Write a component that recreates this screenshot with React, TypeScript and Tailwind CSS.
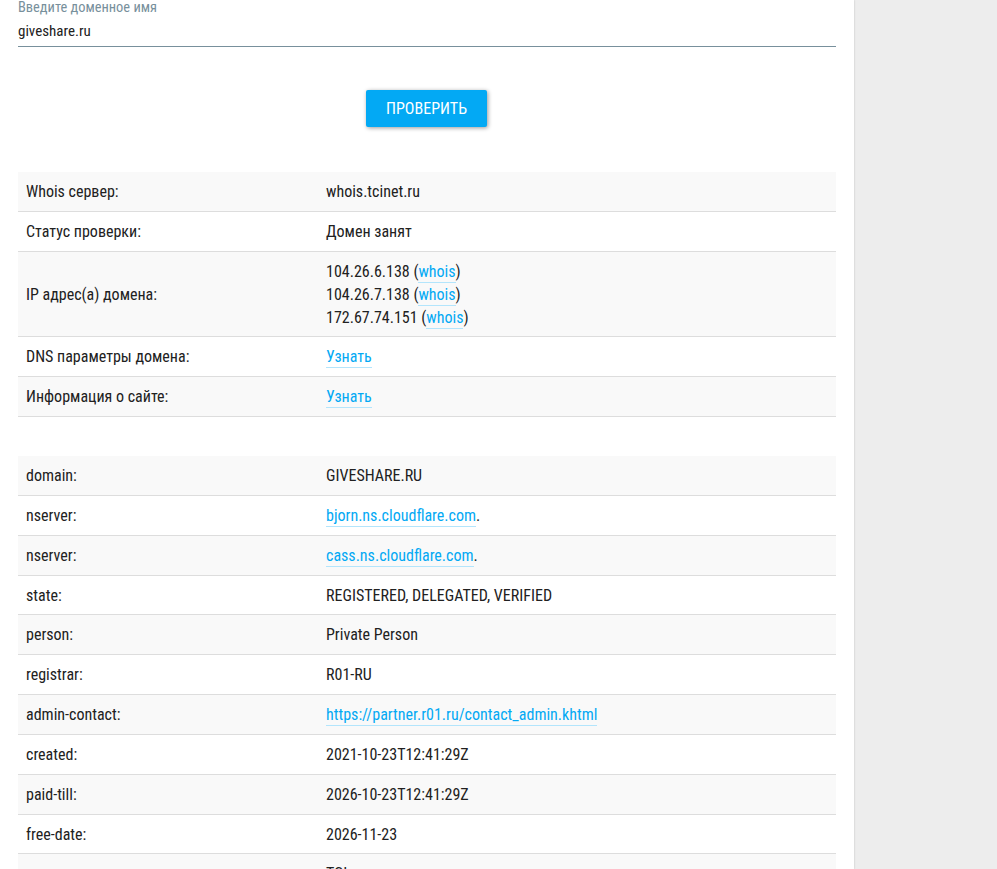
import React from 'react';

interface Row {
  label: string;
  value: React.ReactNode;
}

interface InfoTableProps {
  rows: Row[];
}

const Link: React.FC<{ children: React.ReactNode }> = ({ children }) => (
  <a
    href="#"
    className="border-b border-[#b3e5fc] pb-px text-[#03a9f4] hover:border-[#03a9f4]"
  >
    {children}
  </a>
);

const serverRows: Row[] = [
  { label: 'Whois сервер:', value: 'whois.tcinet.ru' },
  { label: 'Статус проверки:', value: 'Домен занят' },
  {
    label: 'IP адрес(а) домена:',
    value: (
      <div className="-mt-[0.5px] leading-[23px]">
        {['104.26.6.138', '104.26.7.138', '172.67.74.151'].map((ip) => (
          <div key={ip}>
            {ip} (<Link>whois</Link>)
          </div>
        ))}
      </div>
    ),
  },
  { label: 'DNS параметры домена:', value: <Link>Узнать</Link> },
  { label: 'Информация о сайте:', value: <Link>Узнать</Link> },
];

const domainRows: Row[] = [
  { label: 'domain:', value: 'GIVESHARE.RU' },
  { label: 'nserver:', value: <><Link>bjorn.ns.cloudflare.com</Link>.</> },
  { label: 'nserver:', value: <><Link>cass.ns.cloudflare.com</Link>.</> },
  { label: 'state:', value: 'REGISTERED, DELEGATED, VERIFIED' },
  { label: 'person:', value: 'Private Person' },
  { label: 'registrar:', value: 'R01-RU' },
  {
    label: 'admin-contact:',
    value: <Link>https://partner.r01.ru/contact_admin.khtml</Link>,
  },
  { label: 'created:', value: '2021-10-23T12:41:29Z' },
  { label: 'paid-till:', value: '2026-10-23T12:41:29Z' },
  { label: 'free-date:', value: '2026-11-23' },
  { label: 'source:', value: 'TCI' },
];

const InfoTable: React.FC<InfoTableProps> = ({ rows }) => (
  <div className="text-base leading-[22.844px]">
    {rows.map((row, index) => (
      <div
        key={index}
        className="flex items-center border-b border-[#dddddd] odd:bg-[#f9f9f9]"
      >
        <div className="w-[300px] px-2 pt-[9px] pb-[7px]">{row.label}</div>
        <div className="flex-1 px-2 pt-[9px] pb-[7px]">{row.value}</div>
      </div>
    ))}
  </div>
);

const App: React.FC = () => {
  return (
    <div className="h-[869px] overflow-hidden bg-[#ededed] font-['Roboto_Condensed',Roboto,sans-serif] text-[#212121] [font-stretch:75%]">
      <main className="h-full w-[854px] bg-white px-[18px] shadow-[0_0_2px_rgba(0,0,0,0.2)]">
        <label htmlFor="domain" className="block h-4 text-[14.4px] leading-4 text-[#78909c]">
          Введите доменное имя
        </label>
        <input
          id="domain"
          defaultValue="giveshare.ru"
          className="block h-[31px] w-full border-b border-[#78909c] text-[15px] outline-none"
        />
        <div className="flex justify-center pt-[43px] pr-0.5 pb-[45px]">
          <button className="h-[37px] w-[121px] rounded-[2px] bg-[#03a9f4] pl-px text-base text-white uppercase shadow-[1px_1px_4px_rgba(0,0,0,0.4)]">
            Проверить
          </button>
        </div>
        <InfoTable rows={serverRows} />
        <div className="mt-[39.12px]">
          <InfoTable rows={domainRows} />
        </div>
      </main>
    </div>
  );
};

export default App;
